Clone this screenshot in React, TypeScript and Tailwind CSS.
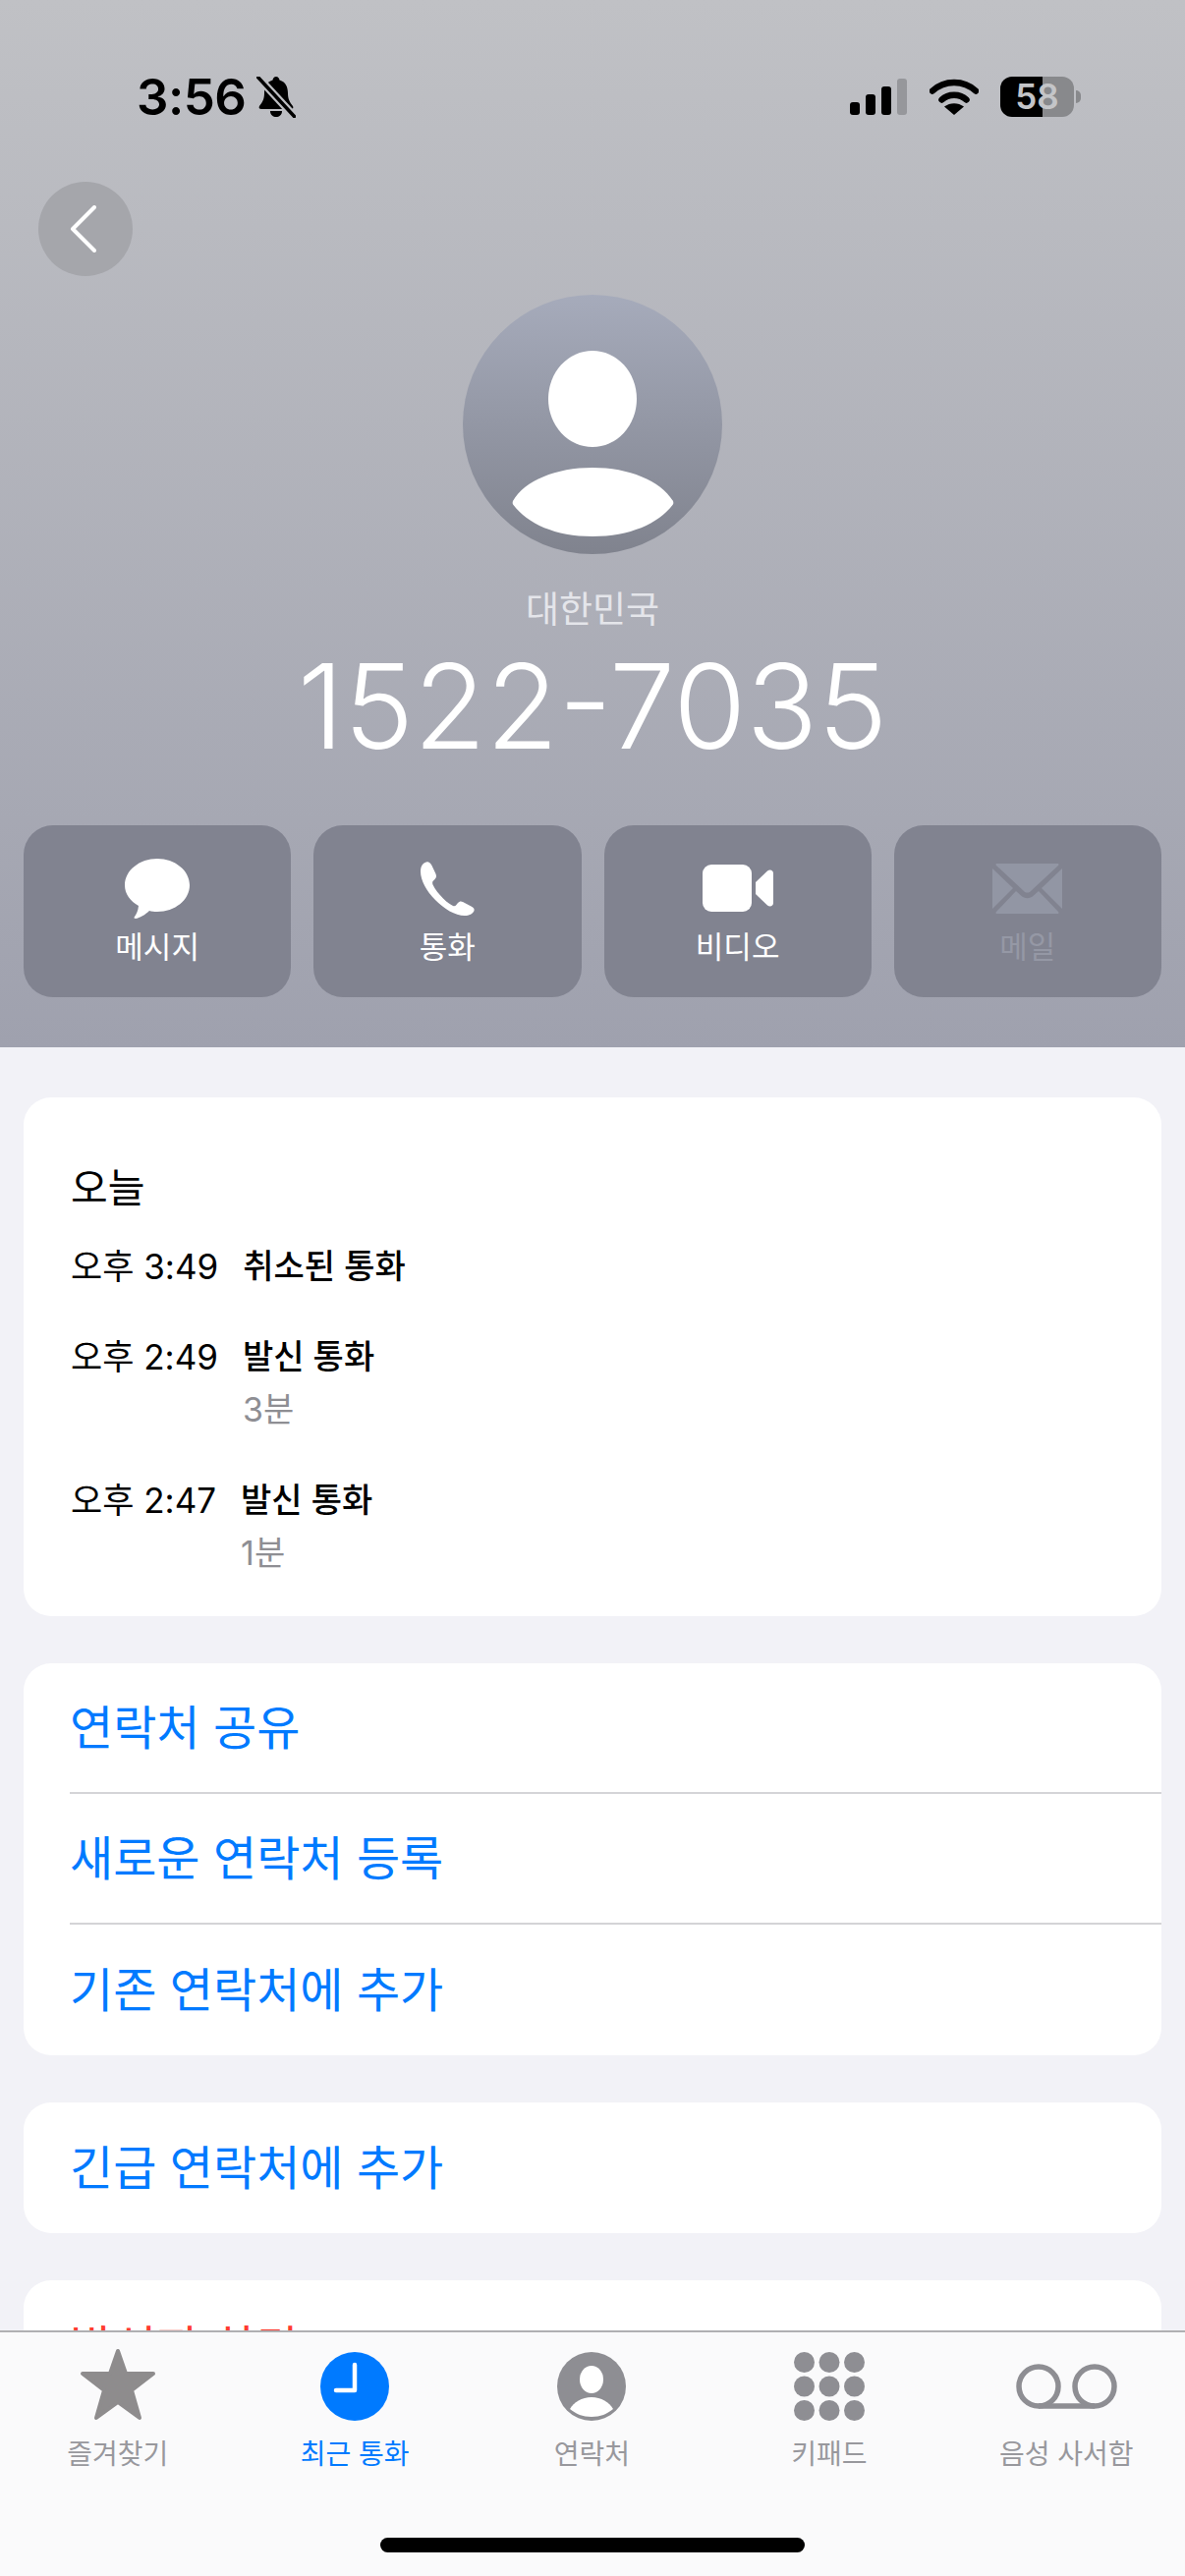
import type { ReactNode } from "react";

const font = { fontFamily: 'Inter, "Noto Sans CJK KR", sans-serif' };

function StatusBar() {
  return (
    <div className="flex h-[41px] items-center justify-between pl-[139px] pr-[106px]">
      <div className="flex items-center gap-[11px]">
        <span className="text-[51px] font-semibold leading-[41px] tracking-[-0.5px] text-black">3:56</span>
        <svg width="40" height="42" viewBox="0 0 40 42">
          <path d="M20 0c2 0 3 1.500 3.500 3.500C30 5.500 32 11 32 17c0 6 2 9 5 13 1 2 0 3-2 3H5c-2 0-3-1-2-3 3-4 5-7 5-13 0-6 2-11.500 8.500-13.500C17 1.500 18 0 20 0Z" fill="#000" />
          <path d="M14 35h12c0 4-3 6-6 6s-6-2-6-6Z" fill="#000" />
          <path d="M1 0 39 41" stroke="#bdbec2" strokeWidth="8" />
          <path d="M1.500 0.500 38.500 40.500" stroke="#000" strokeWidth="3.500" strokeLinecap="round" />
        </svg>
      </div>
      <div className="flex items-center">
        <div className="flex h-[37px] items-end gap-[6px]">
          <div className="h-[13px] w-[10px] rounded-[3px] bg-black" />
          <div className="h-[21px] w-[10px] rounded-[3px] bg-black" />
          <div className="h-[29px] w-[10px] rounded-[3px] bg-black" />
          <div className="h-[37px] w-[10px] rounded-[3px] bg-[#96979b]" />
        </div>
        <svg className="ml-[23px]" width="50" height="37" viewBox="0 0 50 37">
          <path d="M3 12.500C15 1 35 1 47 12.500" fill="none" stroke="#000" strokeWidth="6.500" strokeLinecap="round" />
          <path d="M12.500 21.500C19 15 31 15 37.500 21.500" fill="none" stroke="#000" strokeWidth="6.500" strokeLinecap="round" />
          <path d="M25 37 15 28.500C21 24 29 24 35 28.500Z" fill="#000" />
        </svg>
        <div className="ml-[22px] flex h-[41px] w-[75px] items-center justify-center rounded-[12px] bg-[linear-gradient(90deg,#000_57%,#88898c_57%)] text-[35px] font-semibold leading-none text-[#c4c5c8]">
          58
        </div>
        <div className="ml-[2px] h-[13px] w-[5px] rounded-r-full bg-[#88898c]" />
      </div>
    </div>
  );
}

function ActionButton({ icon, label, dim }: { icon: ReactNode; label: string; dim?: boolean }) {
  return (
    <div className="flex h-[175px] flex-col items-center rounded-[30px] bg-[#818390]">
      <div className="mt-[32px] flex h-[64px] items-center justify-center">{icon}</div>
      <div className={`mt-[8px] text-[31px] leading-[40px] ${dim ? "text-[#9598a5]" : "text-white"}`}>{label}</div>
    </div>
  );
}

function Header() {
  return (
    <header className="flex h-[1066px] flex-col bg-[linear-gradient(180deg,#c0c1c5_0%,#9fa1ae_100%)] pt-[78px]">
      <StatusBar />
      <div className="ml-[39px] mt-[66px] flex h-[96px] w-[96px] items-center justify-center rounded-full bg-[#a5a6ab]">
        <svg className="mr-[4px]" width="28" height="48" viewBox="0 0 28 48">
          <path d="M25 2 3 24l22 22" fill="none" stroke="#fff" strokeWidth="4" strokeLinecap="round" strokeLinejoin="round" />
        </svg>
      </div>
      <svg className="mt-[19px] self-center" width="264" height="264" viewBox="0 0 264 264">
        <defs>
          <linearGradient id="avatar" x1="0" y1="0" x2="0" y2="1">
            <stop offset="0" stopColor="#a6abbb" />
            <stop offset="1" stopColor="#80838e" />
          </linearGradient>
        </defs>
        <circle cx="132" cy="132" r="132" fill="url(#avatar)" />
        <ellipse cx="132" cy="106" rx="45" ry="49" fill="#fff" />
        <path d="M51 210C63 189 95 176 132 176C169 176 201 189 214 210C214.500 212 214.500 213 213.500 214C199 233 170 246 132 246C94 246 66 233 51.500 214C50.500 213 50.500 212 51 210Z" fill="#fff" />
      </svg>
      <div className="mt-[35px] text-center text-[37px] leading-[44px] text-[#e4e5ea]">대한민국</div>
      <div className="mt-[16px] text-center text-[120px] font-[350] leading-[120px] text-white">1522-7035</div>
      <div className="mt-[61px] grid grid-cols-4 gap-[23px] px-[24px]">
        <ActionButton
          label="메시지"
          icon={
            <svg width="66" height="61" viewBox="0 0 66 61">
              <path d="M33 0C51 0 66 12 66 27C66 42 51 54 33 54C30 54 27 53.700 25 53C21 57 15 60.500 11 61C9.500 61 9 60 10 59C12 56 13.500 53 14 48C5.500 43 0 36 0 27C0 12 15 0 33 0Z" fill="#fff" />
            </svg>
          }
        />
        <ActionButton
          label="통화"
          icon={
            <svg width="55" height="55" viewBox="0 0 55 55">
              <path d="M2 3C4 1 6 0 8 .5C9.500 1 10.500 2 11.500 4L15.500 12.500C16.500 15 16 16.500 14.500 18L12.500 20C12 21 12 22 12.500 23.500C15 28.500 18.500 33 23 37.500C27.500 42 31 44 33 45C34.500 45.500 35.500 45 36 44.500L38 42C39.500 40.500 41 40 43 41L51.500 45.500C54 47 55 48 54.500 50C53.500 53 49 55 45 55C35 55 24 48 15 39C6 30 0 19 0 10C0 7.500 .5 5 2 3Z" fill="#fff" />
            </svg>
          }
        />
        <ActionButton
          label="비디오"
          icon={
            <svg width="72" height="48" viewBox="0 0 72 48">
              <rect width="50" height="48" rx="9" fill="#fff" />
              <path d="M54 18 66 6.500C68.500 4.500 72 5.500 72 9V39C72 42.500 68.500 43.500 66 41.500L54 30Z" fill="#fff" />
            </svg>
          }
        />
        <ActionButton
          dim
          label="메일"
          icon={
            <svg width="71" height="51" viewBox="0 0 71 51" fill="#9296a4">
              <path d="M5 0H66C67.500 0 68 1 67 2L39 28C37 30 34 30 32 28L4 2C3 1 3.500 0 5 0Z" />
              <path d="M0 5 21 25 0 46Z" />
              <path d="M71 5 50 25 71 46Z" />
              <path d="M5 51C3.500 51 3 50 4 49L24 28 29 32.500C33 36 38 36 42 32.500L47 28 67 49C68 50 67.500 51 66 51Z" />
            </svg>
          }
        />
      </div>
    </header>
  );
}

function CallRow({ time, kind, sub }: { time: string; kind: string; sub?: string }) {
  return (
    <div className="flex gap-[25px]">
      <div className="text-[35px] leading-[46px] text-black">{time}</div>
      <div>
        <div className="text-[34px] font-medium leading-[46px] text-black">{kind}</div>
        {sub && <div className="mt-[8px] text-[34px] leading-[46px] text-[#8e8e93]">{sub}</div>}
      </div>
    </div>
  );
}

function LinkRow({ label, last, red }: { label: string; last?: boolean; red?: boolean }) {
  return (
    <div className="pl-[47px]">
      <div
        className={`flex h-[133px] items-center text-[48px] ${red ? "pt-[5px] text-[#ff3b30]" : "text-[#007aff]"} ${last ? "" : "border-b-2 border-[#d4d4d7]"}`}
      >
        {label}
      </div>
    </div>
  );
}

function TabItem({ icon, label, active }: { icon: ReactNode; label: string; active?: boolean }) {
  return (
    <div className="flex flex-col items-center">
      <div className="flex h-[76px] items-center justify-center">{icon}</div>
      <div className={`mt-[15px] text-[28px] leading-[36px] ${active ? "text-[#007aff]" : "text-[#98989d]"}`}>{label}</div>
    </div>
  );
}

function TabBar() {
  return (
    <nav className="absolute bottom-0 left-0 right-0 h-[250px] border-t-2 border-[#b0b0b3] bg-[#fafafb] pt-[15px]">
      <div className="-ml-[1px] grid grid-cols-5">
        <TabItem
          label="즐겨찾기"
          icon={
            <svg width="78" height="74" viewBox="0 0 78 74">
              <path d="M39 3 47 26H75L53 43 61 71 39 55 17 71 25 43 3 26H31Z" fill="#8e8c8d" stroke="#8e8c8d" strokeWidth="4" strokeLinejoin="round" />
            </svg>
          }
        />
        <TabItem
          active
          label="최근 통화"
          icon={
            <svg className="mt-[3px]" width="70" height="70" viewBox="0 0 70 70">
              <circle cx="35" cy="35" r="35" fill="#007aff" />
              <path d="M35 13V39H16" fill="none" stroke="#fff" strokeWidth="4.500" strokeLinecap="round" strokeLinejoin="round" />
            </svg>
          }
        />
        <TabItem
          label="연락처"
          icon={
            <svg className="mt-[3px]" width="70" height="70" viewBox="0 0 70 70">
              <circle cx="35" cy="35" r="35" fill="#8e8e93" />
              <ellipse cx="35" cy="28" rx="12" ry="14" fill="#fff" />
              <path d="M13 58C17 51 25 46 35 46C45 46 53 51 57 58C51 63 44 66 35 66C26 66 19 63 13 58Z" fill="#fff" />
            </svg>
          }
        />
        <TabItem
          label="키패드"
          icon={
            <svg className="mt-[3px]" width="72" height="70" viewBox="0 0 72 70" fill="#8e8e93">
              <circle cx="10.500" cy="10.500" r="10.500" />
              <circle cx="36" cy="10.500" r="10.500" />
              <circle cx="61.500" cy="10.500" r="10.500" />
              <circle cx="10.500" cy="35" r="10.500" />
              <circle cx="36" cy="35" r="10.500" />
              <circle cx="61.500" cy="35" r="10.500" />
              <circle cx="10.500" cy="59.500" r="10.500" />
              <circle cx="36" cy="59.500" r="10.500" />
              <circle cx="61.500" cy="59.500" r="10.500" />
            </svg>
          }
        />
        <TabItem
          label="음성 사서함"
          icon={
            <svg className="mt-[3px]" width="103" height="46" viewBox="0 0 103 46" fill="none" stroke="#8e8e93" strokeWidth="5.500">
              <circle cx="23" cy="23" r="20" />
              <circle cx="80" cy="23" r="20" />
              <path d="M23 43H80" />
            </svg>
          }
        />
      </div>
      <div className="absolute bottom-[24px] left-[387px] h-[15px] w-[432px] rounded-full bg-black" />
    </nav>
  );
}

export default function App() {
  return (
    <div className="relative h-[2622px] w-[1206px] overflow-hidden bg-[#f2f2f7]" style={font}>
      <Header />
      <main className="flex flex-col gap-[48px] px-[24px] pt-[51px]">
        <section className="flex h-[528px] flex-col rounded-[28px] bg-white pl-[48px] pt-[65px]">
          <div className="text-[41px] leading-[54px] text-black">오늘</div>
          <div className="mt-[30px] flex flex-col gap-[46px]">
            <CallRow time="오후 3:49" kind="취소된 통화" />
            <CallRow time="오후 2:49" kind="발신 통화" sub="3분" />
            <CallRow time="오후 2:47" kind="발신 통화" sub="1분" />
          </div>
        </section>
        <section className="rounded-[28px] bg-white">
          <LinkRow label="연락처 공유" />
          <LinkRow label="새로운 연락처 등록" />
          <LinkRow label="기존 연락처에 추가" last />
        </section>
        <section className="rounded-[28px] bg-white">
          <LinkRow label="긴급 연락처에 추가" last />
        </section>
        <section className="rounded-[28px] bg-white">
          <LinkRow label="발신자 차단" last red />
        </section>
      </main>
      <TabBar />
    </div>
  );
}
